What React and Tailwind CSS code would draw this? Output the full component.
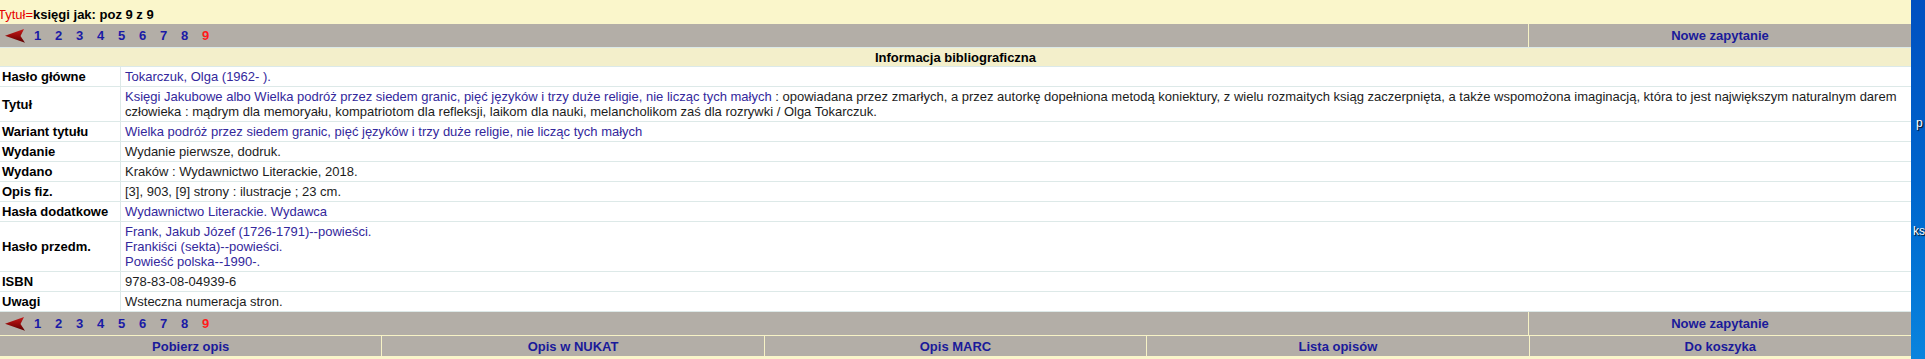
import React from "react";

const link = "text-[#33289c]";

const Arrow = () => (
  <svg width="20" height="14" viewBox="0 0 20 14" className="shrink-0">
    <defs>
      <linearGradient id="arrowFill" x1="0" y1="0" x2="0" y2="1">
        <stop offset="0" stopColor="#c81c1c" />
        <stop offset="0.5" stopColor="#960a0a" />
        <stop offset="1" stopColor="#5a0000" />
      </linearGradient>
    </defs>
    <polygon points="0,6.8 19,0 15.5,7 20,13.8" fill="url(#arrowFill)" />
  </svg>
);

const Pager = () => (
  <div className="grid grid-cols-[1528px_1fr] gap-x-px bg-[#f7f3c6] h-[23px]">
    <div className="bg-[#b3aea7] flex items-center pl-[5px]">
      <Arrow />
      <div className="flex ml-[9px] font-bold">
        {[1, 2, 3, 4, 5, 6, 7, 8].map((n) => (
          <span key={n} className="w-[21px] text-[#1a1aa6]">
            {n}
          </span>
        ))}
        <span className="text-[#ff1a1a]">9</span>
      </div>
    </div>
    <div className="bg-[#b3aea7] flex items-center justify-center font-bold text-[#1a1a9a]">
      Nowe zapytanie
    </div>
  </div>
);

const rows = [
  { label: "Hasło główne", value: <span className={link}>Tokarczuk, Olga (1962- ).</span> },
  {
    label: "Tytuł",
    value: (
      <>
        <span className={link}>
          Księgi Jakubowe albo Wielka podróż przez siedem granic, pięć języków i trzy duże religie, nie licząc tych małych
        </span>{" "}
        : opowiadana przez zmarłych, a przez autorkę dopełniona metodą koniektury, z wielu rozmaitych ksiąg zaczerpnięta, a także wspomożona imaginacją, która to jest największym naturalnym darem człowieka : mądrym dla memoryału, kompatriotom dla refleksji, laikom dla nauki, melancholikom zaś dla rozrywki / Olga Tokarczuk.
      </>
    ),
  },
  {
    label: "Wariant tytułu",
    value: (
      <span className={link}>
        Wielka podróż przez siedem granic, pięć języków i trzy duże religie, nie licząc tych małych
      </span>
    ),
  },
  { label: "Wydanie", value: "Wydanie pierwsze, dodruk." },
  { label: "Wydano", value: "Kraków : Wydawnictwo Literackie, 2018." },
  { label: "Opis fiz.", value: "[3], 903, [9] strony : ilustracje ; 23 cm." },
  { label: "Hasła dodatkowe", value: <span className={link}>Wydawnictwo Literackie. Wydawca</span> },
  {
    label: "Hasło przedm.",
    value: (
      <div className={`flex flex-col ${link}`}>
        <span>Frank, Jakub Józef (1726-1791)--powieści.</span>
        <span>Frankiści (sekta)--powieści.</span>
        <span>Powieść polska--1990-.</span>
      </div>
    ),
  },
  { label: "ISBN", value: "978-83-08-04939-6" },
  { label: "Uwagi", value: "Wsteczna numeracja stron." },
];

const buttons = ["Pobierz opis", "Opis w NUKAT", "Opis MARC", "Lista opisów", "Do koszyka"];

const App = () => {
  return (
    <div className="flex w-[1925px] h-[359px] overflow-hidden font-['Liberation_Sans',Arial,sans-serif] text-[13px] leading-[15px]">
      <div className="w-[1911px] bg-[#faf6cb] flex flex-col">
        <div className="h-[24px] pt-[7px] ml-[-2px]">
          <span className="text-[#e60000]">Tytuł=</span>
          <span className="font-bold text-black">księgi jak: poz 9 z 9</span>
        </div>

        <Pager />

        <div className="h-[20px] border-y border-[#dbe9e9] bg-[#f3efcb] flex items-center justify-center font-bold text-black">
          Informacja bibliograficzna
        </div>

        <div className="grid grid-cols-[120px_1fr] gap-px bg-[#dde9e8] border-b border-[#dde9e8]">
          {rows.map((r) => (
            <React.Fragment key={r.label}>
              <div className="bg-white pl-[2px] py-[2px] flex items-center font-bold text-black">{r.label}</div>
              <div className="bg-white pl-[4px] pr-[4px] py-[2px] text-[#1c1c1c]">{r.value}</div>
            </React.Fragment>
          ))}
        </div>

        <Pager />

        <div className="grid grid-cols-5 gap-x-px bg-[#f7f3c6] pt-px">
          {buttons.map((b) => (
            <div key={b} className="bg-[#b3aea7] h-[20px] flex items-center justify-center font-bold text-[#1a1a9a]">
              {b}
            </div>
          ))}
        </div>
      </div>

      <div className="w-[14px] h-[359px] bg-linear-to-b from-[#0050c0] via-[#0064cc] to-[#0a84de] flex flex-col text-white text-[12px] leading-[14px] [text-shadow:1px_1px_1px_#000]">
        <span className="pl-[5px] mt-[116px]">p</span>
        <span className="pl-[2px] mt-[94px] whitespace-nowrap">ks</span>
      </div>
    </div>
  );
};

export default App;
